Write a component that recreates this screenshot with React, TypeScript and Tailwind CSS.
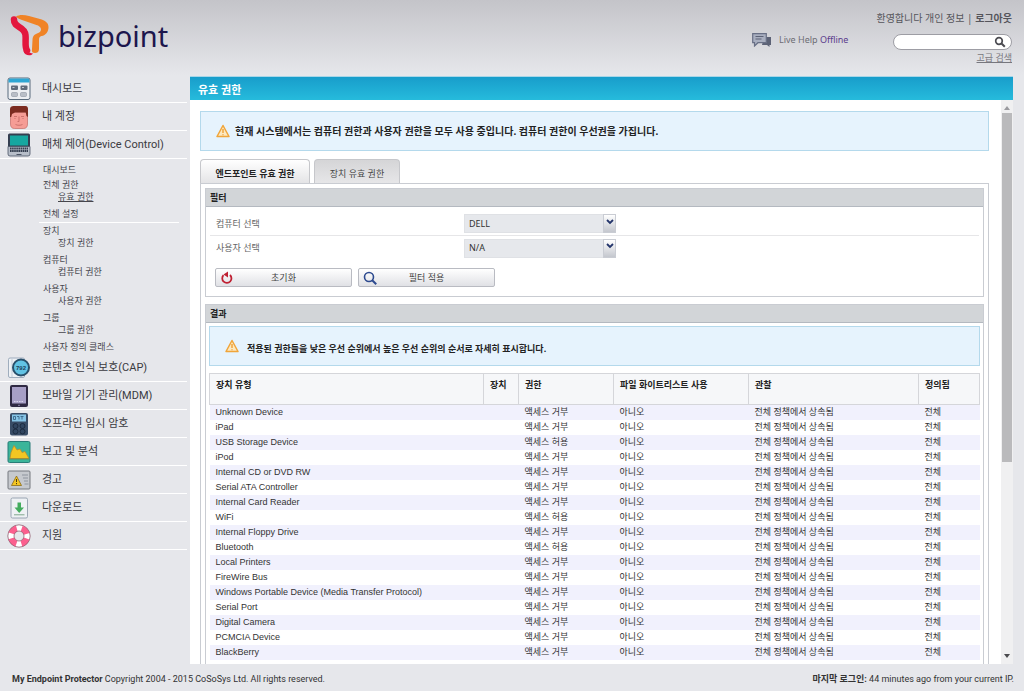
import type { ReactNode } from "react";

type MenuItem = { label: string; icon: ReactNode };

const svgProps = {
  viewBox: "0 0 24 24",
  className: "h-6 w-6 shrink-0",
  "aria-hidden": true,
};

const DashboardIcon = () => (
  <svg {...svgProps}>
    <rect x="1" y="1" width="22" height="21.500" rx="2" fill="#eceef2" stroke="#596a7c" />
    <path d="M1.500 5.500V3a1.500 1.500 0 0 1 1.500-1.500h18A1.500 1.500 0 0 1 22.500 3v2.500z" fill="#2ea6d3" />
    <rect x="4" y="8.500" width="7" height="4.500" rx="1" fill="#5f6b7a" />
    <rect x="13.500" y="8.500" width="7" height="4.500" rx="1" fill="#5f6b7a" />
    <path d="M5.500 10.500h2M15 10.500h2" stroke="#c3cad3" />
    <rect x="4.500" y="15.500" width="6" height="4" rx="1" fill="#b9bec7" stroke="#8d95a1" strokeWidth=".6" />
    <rect x="13.500" y="15.500" width="6" height="4" rx="1" fill="#b9bec7" stroke="#8d95a1" strokeWidth=".6" />
  </svg>
);

const AccountIcon = () => (
  <svg {...svgProps}>
    <path d="M3.500 7h17v12c0 3-1.500 4.500-4 4.500h-9c-2.500 0-4-1.500-4-4.500z" fill="#f59c95" stroke="#c36b66" strokeWidth=".7" />
    <path d="M3 12V4c0-2 1.500-3 3.500-3h12C20.500 1 21 2.500 21 4v8l-1.500-1-.8-3.500H8L5 9l-.8 3z" fill="#7b2b20" />
    <path d="M7 11.500h3M14 11.500h3M12 11.500v5h-1.500M8.500 19.500c2 1 5 1 7 0M8 13v1M16 13v1" fill="none" stroke="#b9605b" strokeWidth=".7" />
  </svg>
);

const LaptopIcon = () => (
  <svg {...svgProps}>
    <rect x="1" y=".5" width="22" height="14" rx="1.500" fill="#343e50" />
    <rect x="3" y="2.500" width="18" height="10" fill="#16a7a0" />
    <path d="M1 13.500h22V21a2 2 0 0 1-2 2H3a2 2 0 0 1-2-2z" fill="#b7bec9" stroke="#4a5364" strokeWidth=".8" />
    <path d="M3 15.500h18M3 18h18" stroke="#353f50" strokeWidth="1.800" strokeDasharray="1.600 .5" />
    <path d="M9.500 21.500h5" stroke="#4a5364" />
  </svg>
);

const ContentIcon = () => (
  <svg {...svgProps}>
    <rect x="1.500" y="2" width="16" height="19.500" rx="1.500" fill="#eef1f5" stroke="#8b9db0" strokeWidth=".8" />
    <path d="M5 2v19" stroke="#c5ced9" />
    <circle cx="14" cy="11.500" r="8" fill="#62c3e4" stroke="#29506b" strokeWidth="2" />
    <text x="14" y="13.800" textAnchor="middle" fontSize="6" fontWeight="700" fill="#1d3f59" fontFamily="Liberation Sans, sans-serif">792</text>
  </svg>
);

const TabletIcon = () => (
  <svg {...svgProps}>
    <rect x="3" y="1" width="18" height="22" rx="2" fill="#2f2943" />
    <rect x="5" y="3" width="14" height="16.500" fill="#a79fc6" />
    <path d="M7 17.500h10" stroke="#d9d4ea" strokeDasharray="1.500 1" />
    <path d="M11 21.300h2" stroke="#8a83a8" />
  </svg>
);

const TokenIcon = () => (
  <svg {...svgProps}>
    <rect x="3" y="1" width="18" height="22.500" rx="2" fill="#384c66" />
    <rect x="5" y="2.500" width="14" height="7" fill="#85c4e6" />
    <path d="M6.500 4.500h2v3h-2zM10 4.500h2v3M13.500 4.500h3M15 4.500v3" fill="none" stroke="#315a7c" strokeWidth=".8" />
    <g fill="#304560" stroke="#172437" strokeWidth=".8">
      <circle cx="8.500" cy="14" r="2.500" />
      <circle cx="15.500" cy="14" r="2.500" />
      <circle cx="8.500" cy="19.500" r="2.500" />
      <circle cx="15.500" cy="19.500" r="2.500" />
    </g>
  </svg>
);

const ReportIcon = () => (
  <svg {...svgProps}>
    <rect x="1" y="1.500" width="22" height="21" rx="1.500" fill="#3bb59a" stroke="#287d78" />
    <path d="M3 18.500l1-6 3-7 3 4.500 3-1 2 3.500 3-1 4 7z" fill="#f3c623" stroke="#c08a28" strokeWidth=".7" />
    <path d="M2 19h20" stroke="#7b7a3c" strokeWidth=".7" />
  </svg>
);

const AlertCardIcon = () => (
  <svg {...svgProps}>
    <rect x="1" y="3" width="22" height="18" rx="1" fill="#c6c9ce" stroke="#75797f" />
    <path d="M15 7h6M16 10h5M17 13h4M17.500 16h4" stroke="#898f98" strokeWidth=".9" />
    <path d="M9.500 8l5 9.500h-10z" fill="#f5c623" stroke="#8c6b16" strokeWidth=".8" strokeLinejoin="round" />
    <path d="M9.500 11v3M9.500 15v1.200" stroke="#4a3a10" />
  </svg>
);

const DownloadIcon = () => (
  <svg {...svgProps}>
    <rect x="4" y="2" width="16.500" height="20" rx="1.500" fill="#eef1f4" stroke="#8795a5" strokeWidth=".8" />
    <path d="M10.500 6.500h3.500v5h3l-4.800 5.500-4.700-5.500h3z" fill="#43ac5e" />
    <path d="M7 18.800h10.500" stroke="#7fa78c" />
  </svg>
);

const SupportIcon = () => (
  <svg {...svgProps}>
    <circle cx="12" cy="12" r="8" fill="none" stroke="#fff" strokeWidth="6" />
    <circle cx="12" cy="12" r="8" fill="none" stroke="#fb5f8e" strokeWidth="6" strokeDasharray="7.566 5" transform="rotate(18 12 12)" />
    <circle cx="12" cy="12" r="11.200" fill="none" stroke="#8a5064" strokeWidth=".7" />
    <circle cx="12" cy="12" r="5" fill="none" stroke="#8a5064" strokeWidth=".7" />
  </svg>
);

const WarningIcon = () => (
  <svg viewBox="0 0 14 14" className="h-3.5 w-3.5 shrink-0" aria-hidden>
    <path d="M7 1.500L13 12.500H1z" fill="#fde9c0" stroke="#f0a53a" strokeWidth="1.500" strokeLinejoin="round" />
    <path d="M7 5v4M7 10.200v1" stroke="#ee9a2c" strokeWidth="1.300" />
  </svg>
);

const topMenu: MenuItem[] = [
  { label: "대시보드", icon: <DashboardIcon /> },
  { label: "내 계정", icon: <AccountIcon /> },
  { label: "매체 제어(Device Control)", icon: <LaptopIcon /> },
];

const bottomMenu: MenuItem[] = [
  { label: "콘텐츠 인식 보호(CAP)", icon: <ContentIcon /> },
  { label: "모바일 기기 관리(MDM)", icon: <TabletIcon /> },
  { label: "오프라인 임시 암호", icon: <TokenIcon /> },
  { label: "보고 및 분석", icon: <ReportIcon /> },
  { label: "경고", icon: <AlertCardIcon /> },
  { label: "다운로드", icon: <DownloadIcon /> },
  { label: "지원", icon: <SupportIcon /> },
];

const subGroups = [
  { title: "장치", child: "장치 권한" },
  { title: "컴퓨터", child: "컴퓨터 권한" },
  { title: "사용자", child: "사용자 권한" },
  { title: "그룹", child: "그룹 권한" },
];

const devices: { name: string; allowed?: boolean }[] = [
  { name: "Unknown Device" },
  { name: "iPad" },
  { name: "USB Storage Device", allowed: true },
  { name: "iPod" },
  { name: "Internal CD or DVD RW" },
  { name: "Serial ATA Controller" },
  { name: "Internal Card Reader" },
  { name: "WiFi", allowed: true },
  { name: "Internal Floppy Drive" },
  { name: "Bluetooth", allowed: true },
  { name: "Local Printers" },
  { name: "FireWire Bus" },
  { name: "Windows Portable Device (Media Transfer Protocol)" },
  { name: "Serial Port" },
  { name: "Digital Camera" },
  { name: "PCMCIA Device" },
  { name: "BlackBerry" },
];

function MenuList({ items }: { items: MenuItem[] }) {
  return (
    <ul className="font-['Roboto','Noto_Sans_CJK_KR',sans-serif]">
      {items.map((item) => (
        <li key={item.label} className="border-b border-white">
          <a href="#" className="flex h-[27px] items-center gap-[11px] pl-[7px] text-[11px] text-[#3a3a40]">
            {item.icon}
            <span className="pt-0.5">{item.label}</span>
          </a>
        </li>
      ))}
    </ul>
  );
}

function SubMenu() {
  return (
    <div className="pt-[5px] pb-px pl-[43px] text-[9px] leading-3 text-[#45454c]">
      <a href="#" className="mb-[3px] block">대시보드</a>
      <a href="#" className="block">전체 권한</a>
      <a href="#" className="mb-[5px] block pl-[15px] underline">유효 권한</a>
      <a href="#" className="block">전체 설정</a>
      <hr className="mt-0.5 mr-2 -ml-1 mb-0.5 border-white" />
      {subGroups.map((g) => (
        <div key={g.title} className="mb-[5px]">
          <a href="#" className="block">{g.title}</a>
          <a href="#" className="block pl-[15px]">{g.child}</a>
        </div>
      ))}
      <a href="#" className="block">사용자 정의 클래스</a>
    </div>
  );
}

function Header() {
  return (
    <header className="flex h-[75px] shrink-0 justify-between bg-linear-to-b from-[#c4c4c9] to-[#e6e7eb] pr-3">
      <a href="#" className="flex items-start gap-[9px] pt-[13px] pl-[9px]">
        <svg viewBox="0 0 40 44" className="h-11 w-10" aria-hidden>
          <path d="M7 3.500C10 1.500 15 1.500 20 3l11 3c5 1.500 8.500 3.500 8.500 8 0 4.500-2.500 8.500-7 9-1.800.3-2.500 1.500-2.500 4v9c0 3-2 4-4 4-2.500 0-3.500-1-3-4l.5-9c.3-4 1.500-5.500 4.500-6.500 2.500-1 4-2 4-4 0-2.500-2.500-4-6-5L13 7C10.500 6.300 8 5 7 3.500z" fill="#f08326" />
          <path d="M5 6.500c-.3 9 10.500 6 11.500 15.500.6 6-1 12 1.500 15.500" fill="none" stroke="#e3173e" strokeWidth="6.500" strokeLinecap="round" />
          <path d="M17 34c.5 4 3 6 7 6.500-2 3-8.500 2.500-9.500-2.500z" fill="#e3173e" />
        </svg>
        <span className="text-[29px] leading-[46px] text-[#1d164d]">bizpoint</span>
      </a>
      <div className="flex gap-7">
        <div className="flex h-20 items-center gap-[7px] text-[9px] text-[#6d6d74]">
          <svg viewBox="0 0 20 14" className="h-3.5 w-5" aria-hidden>
            <path d="M12 4h7v8h-1.500v2L15 12h-5z" fill="#5c6276" />
            <path d="M.7.700h13.600v9H6L2.500 13v-3.300H.7z" fill="#a9afc0" stroke="#697086" strokeWidth="1.200" />
            <path d="M3.500 3.500h8M3.500 6h6" stroke="#5c6276" />
          </svg>
          <span>
            Live Help{" "}
            <a href="#" className="text-[#5b3d8c]">Offline</a>
          </span>
        </div>
        <div className="flex flex-col items-end pt-2.5 text-[10px] leading-4 text-[#55555b]">
          <p>
            <a href="#">환영합니다 개인 정보</a> |{" "}
            <a href="#" className="font-bold">로그아웃</a>
          </p>
          <form className="mt-2 flex h-4 w-[119px] items-center rounded-full border border-[#9d9da4] bg-white pr-[5px]">
            <input type="search" aria-label="검색" className="min-w-0 flex-1 bg-transparent pl-2 text-[9px] outline-none" />
            <button type="button" aria-label="검색">
              <svg viewBox="0 0 12 12" className="h-3 w-3" aria-hidden>
                <circle cx="5" cy="5" r="3.300" fill="none" stroke="#4c4c52" strokeWidth="1.700" />
                <path d="M7.500 7.500l3.300 3.300" stroke="#4c4c52" strokeWidth="2" />
              </svg>
            </button>
          </form>
          <a href="#" className="text-[9px] text-[#77777e] underline">고급 검색</a>
        </div>
      </div>
    </header>
  );
}

function FilterSelect({ id, value }: { id: string; value: string }) {
  return (
    <div className="relative w-[152px]">
      <select id={id} defaultValue={value} className="block h-[19px] w-full appearance-none border border-[#dfe1e5] bg-[#e6e8ec] pl-1 text-[9px] text-[#333]">
        <option>{value}</option>
      </select>
      <span className="pointer-events-none absolute inset-y-0 right-0 flex w-[13px] items-center justify-center border border-[#c9ccd3] bg-linear-to-b from-white to-[#c4c7ce]">
        <svg viewBox="0 0 8 6" className="mb-1 h-1.5 w-2" aria-hidden>
          <path d="M1 1l3 3 3-3" fill="none" stroke="#24356b" strokeWidth="1.800" />
        </svg>
      </span>
    </div>
  );
}

function ActionButton({ icon, label }: { icon: ReactNode; label: string }) {
  return (
    <button type="button" className="flex h-[19px] w-[137px] items-center rounded-xs border border-[#b9bbc2] bg-linear-to-b from-white to-[#e0e1e5] pr-[18px] pl-1 text-[9px] text-[#444]">
      {icon}
      <span className="flex-1 text-center">{label}</span>
    </button>
  );
}

function Panel({ title, children }: { title: string; children: ReactNode }) {
  return (
    <section className="border border-[#c9ccd2]">
      <h2 className="h-[18px] border-b border-[#b4b9c0] bg-[#d2d5d8] pl-1 text-[9px] leading-[18px] font-bold text-[#222]">{title}</h2>
      {children}
    </section>
  );
}

function FilterPanel() {
  return (
    <Panel title="필터">
      <div className="px-1 pt-[5px] pb-[9px] text-[9px] text-[#666]">
        <div className="flex h-6 items-center border-b border-[#e6e6e8] pl-1.5">
          <label htmlFor="computer" className="w-[248px]">컴퓨터 선택</label>
          <FilterSelect id="computer" value="DELL" />
        </div>
        <div className="flex h-6 items-center pl-1.5">
          <label htmlFor="user" className="w-[248px]">사용자 선택</label>
          <FilterSelect id="user" value="N/A" />
        </div>
        <div className="mt-2 flex gap-1.5 pl-[5px]">
          <ActionButton
            label="초기화"
            icon={
              <svg viewBox="0 0 14 14" className="h-3.5 w-3.5" aria-hidden>
                <path d="M3.500 4.200a4.600 4.600 0 1 0 6.500-.2" fill="none" stroke="#bf2032" strokeWidth="1.800" />
                <path d="M3.500 3.500L8 .5v6z" fill="#bf2032" />
              </svg>
            }
          />
          <ActionButton
            label="필터 적용"
            icon={
              <svg viewBox="0 0 14 14" className="h-3.5 w-3.5" aria-hidden>
                <circle cx="6" cy="6" r="4.500" fill="none" stroke="#2d4a8f" strokeWidth="1.600" />
                <path d="M9.200 9.200l4 4" stroke="#2d4a8f" strokeWidth="2" />
              </svg>
            }
          />
        </div>
      </div>
    </Panel>
  );
}

function ResultTable() {
  const th = "border border-[#d5d6da] pl-1.5 pt-[5px] align-top font-bold";
  return (
    <table className="mt-[7px] w-full table-fixed border-collapse text-left text-[9px] leading-3 text-[#333]">
      <thead>
        <tr className="h-[31px] bg-[#f6f7f9] text-[#222]">
          <th className={th}>장치 유형</th>
          <th className={`${th} w-[35px]`}>장치</th>
          <th className={`${th} w-[95px]`}>권한</th>
          <th className={`${th} w-[135px]`}>파일 화이트리스트 사용</th>
          <th className={`${th} w-[170px]`}>관찰</th>
          <th className={`${th} w-[61px]`}>정의됨</th>
        </tr>
      </thead>
      <tbody>
        {devices.map((d) => (
          <tr key={d.name} className="h-[15px] odd:bg-[#f1f1fd] [&>td]:pl-1.5">
            <td className="font-['Liberation_Sans']">{d.name}</td>
            <td />
            <td>{d.allowed ? "액세스 허용" : "액세스 거부"}</td>
            <td>아니오</td>
            <td>전체 정책에서 상속됨</td>
            <td>전체</td>
          </tr>
        ))}
      </tbody>
    </table>
  );
}

function ScrollTrack() {
  return (
    <div className="flex w-3 shrink-0 flex-col items-center bg-[#f0f0f1] py-1.5" aria-hidden>
      <svg viewBox="0 0 6 4" className="h-1 w-1.5">
        <path d="M0 4l3-4 3 4z" fill="#9a9a9e" />
      </svg>
      <div className="mt-[3px] h-[349px] w-2.5 bg-[#bababc]" />
      <svg viewBox="0 0 6 4" className="mt-auto h-1 w-1.5">
        <path d="M0 0l3 4 3-4z" fill="#4a4a4e" />
      </svg>
    </div>
  );
}

export default function App() {
  return (
    <div className="flex h-screen flex-col overflow-hidden bg-[#e6e7eb] font-['Noto_Sans','Noto_Sans_CJK_KR',sans-serif]">
      <Header />
      <div className="flex min-h-0 flex-1 pr-[11px]">
        <nav className="w-[190px] shrink-0 pr-[3px]">
          <MenuList items={topMenu} />
          <SubMenu />
          <MenuList items={bottomMenu} />
        </nav>

        <main className="flex min-w-0 flex-1 flex-col pt-px">
          <h1 className="h-6 shrink-0 border-t border-[#a8d6e8] bg-linear-to-b from-[#189dcb] to-[#26bbdc] pl-2 text-[11px] leading-[26px] font-bold text-white">유효 권한</h1>
          <div className="flex min-h-0 flex-1 bg-white">
            <div className="min-w-0 flex-1 overflow-hidden pt-[11px] pr-3 pl-2.5">
              <div className="flex h-10 items-center gap-[5px] border border-[#b4d9ec] bg-[#e6f3fd] pl-[15px] text-[10px] font-bold text-[#222]">
                <WarningIcon />
                현재 시스템에서는 컴퓨터 권한과 사용자 권한을 모두 사용 중입니다. 컴퓨터 권한이 우선권을 가집니다.
              </div>

              <div className="mt-2 flex gap-1 text-[9px]" role="tablist">
                <button type="button" role="tab" aria-selected="true" className="h-6 w-[110px] rounded-t-sm border border-b-0 border-[#c6c7cb] bg-linear-to-b from-white to-[#e4e4e6] pt-1 font-bold text-[#222]">
                  엔드포인트 유효 권한
                </button>
                <button type="button" role="tab" aria-selected="false" className="h-6 w-[86px] rounded-t-sm border border-b-0 border-[#c6c7cb] bg-linear-to-b from-[#d5d5d7] to-[#e6e6e8] pt-1 text-[#444]">
                  장치 유효 권한
                </button>
              </div>

              <div className="flex flex-col gap-[7px] border border-[#c9ccd2] p-1">
                <FilterPanel />
                <Panel title="결과">
                  <div className="px-[3px] pt-[3px] pb-4">
                    <div className="flex h-10 items-center gap-2 border border-[#b4d9ec] bg-[#e6f3fd] pl-[15px] text-[9px] font-bold text-[#222]">
                      <WarningIcon />
                      <span className="pt-1.5">적용된 권한들을 낮은 우선 순위에서 높은 우선 순위의 순서로 자세히 표시합니다.</span>
                    </div>
                    <ResultTable />
                  </div>
                </Panel>
              </div>
            </div>
            <ScrollTrack />
          </div>
        </main>
      </div>
      <footer className="flex h-[27px] shrink-0 items-center justify-between pt-1 pr-2.5 pl-3 font-['Roboto','Noto_Sans_CJK_KR',sans-serif] text-[9px] text-[#333]">
        <p>
          <b>My Endpoint Protector</b> Copyright 2004 - 2015 CoSoSys Ltd. All rights reserved.
        </p>
        <p>
          <b>마지막 로그인:</b> 44 minutes ago from your current IP.
        </p>
      </footer>
    </div>
  );
}
